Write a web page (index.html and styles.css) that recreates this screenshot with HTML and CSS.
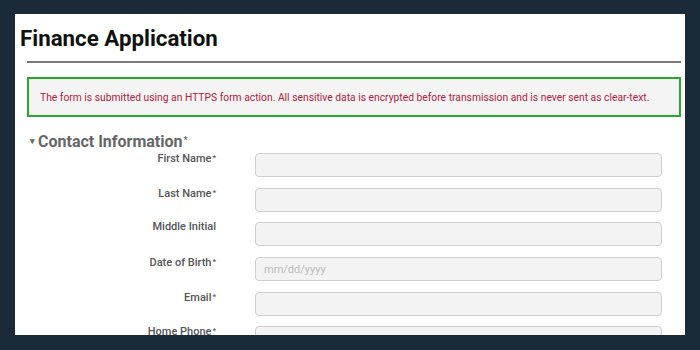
FILE: index.html
```html
<!DOCTYPE html>
<html lang="en">
<head>
  <meta charset="UTF-8">
  <meta name="viewport" content="width=device-width, initial-scale=1.0">
  <title>Finance Application</title>
  <link rel="stylesheet" href="styles.css">
</head>
<body>
  <div class="page">
    <h1>Finance Application</h1>
    <hr class="rule">
    <div class="notice">The form is submitted using an HTTPS form action. All sensitive data is encrypted before transmission and is never sent as clear-text.</div>

    <form class="app-form">
      <h2 class="section"><span class="caret">&#9662;</span>Contact Information<span class="req">*</span></h2>

      <div class="fields">
        <label for="firstName">First Name<span class="req">*</span></label>
        <input type="text" id="firstName">

        <label for="lastName">Last Name<span class="req">*</span></label>
        <input type="text" id="lastName">

        <label for="middle">Middle Initial</label>
        <input type="text" id="middle">

        <label for="dob">Date of Birth<span class="req">*</span></label>
        <input type="text" id="dob" placeholder="mm/dd/yyyy">

        <label for="email">Email<span class="req">*</span></label>
        <input type="text" id="email">

        <label for="homePhone">Home Phone<span class="req">*</span></label>
        <input type="text" id="homePhone">
      </div>
    </form>
  </div>
</body>
</html>
```

FILE: styles.css
```css
body {
  margin: 0;
  background: #1b2a39;
  font-family: Roboto, "Liberation Sans", sans-serif;
  padding: 14px 15px 15px;
}

.page {
  background: #fff;
  height: 321px;
  overflow: hidden;
  padding: 0 4px 0 5px;
  box-sizing: border-box;
}

h1 {
  margin: 0;
  padding-top: 11px;
  font-size: 22.3px;
  font-weight: 700;
  color: #111;
  line-height: 26px;
}

.rule {
  margin: 10px 0 0 7px;
  border: 0;
  border-top: 2px solid #7a7a7a;
}

.notice {
  margin: 14px 0 0 7px;
  height: 40px;
  box-sizing: border-box;
  border: 2px solid #27a92b;
  background: #f4f4f4;
  color: #b3213d;
  font-size: 10.3px;
  display: flex;
  align-items: center;
  padding: 0 0 0 11px;
}

.section {
  margin: 14px 0 0 10px;
  font-size: 16px;
  font-weight: 700;
  color: #666;
  line-height: 18px;
}

.caret {
  font-size: 9px;
  margin-right: 3px;
  vertical-align: 3px;
}

.req {
  font-size: 9px;
  vertical-align: 4px;
  margin-left: 1px;
}

.fields {
  display: grid;
  grid-template-columns: 196px 407px;
  column-gap: 39px;
  row-gap: 10.7px;
  margin-top: 2px;
}

label {
  text-align: right;
  font-size: 11px;
  font-weight: 500;
  color: #555;
  margin-top: -2px;
  line-height: 14px;
}

label .req {
  font-size: 8px;
  vertical-align: 2px;
}

input {
  height: 24px;
  box-sizing: border-box;
  border: 1.5px solid #cfcfcf;
  border-radius: 4px;
  background: #f3f3f3;
  font-family: inherit;
  font-size: 11px;
  padding: 0 8px;
  margin: 0;
}

input::placeholder {
  color: #bbb;
}
```
